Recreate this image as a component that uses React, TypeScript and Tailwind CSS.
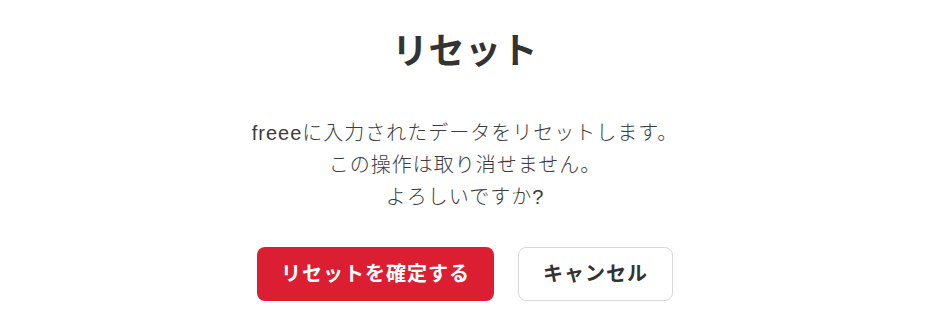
export default function App() {
  return (
    <div
      className="w-[934px] h-[327px] bg-white flex flex-col items-center text-[#333]"
      style={{ fontFamily: '"Liberation Sans", "Noto Sans CJK JP", sans-serif' }}
    >
      <h1 className="mt-[26px] -ml-1 text-[36px] leading-[52px] font-bold tracking-[0.5px]">リセット</h1>
      <div className="mt-[39px] -ml-1 text-[20px] leading-[32px] text-center text-[#3c3c3c] font-light tracking-[1px]">
        <p>freeeに入力されたデータをリセットします。</p>
        <p>この操作は取り消せません。</p>
        <p>よろしいですか?</p>
      </div>
      <div className="mt-[34px] -ml-1 flex gap-6">
        <button className="w-[237px] h-[54px] rounded-[8px] bg-[#dc1e32] text-white text-[20px] font-bold tracking-[1px]">
          リセットを確定する
        </button>
        <button className="w-[155px] h-[54px] rounded-[8px] bg-white border border-[#d9d9d9] text-[20px] font-bold text-[#333] tracking-[1px]">
          キャンセル
        </button>
      </div>
    </div>
  );
}
